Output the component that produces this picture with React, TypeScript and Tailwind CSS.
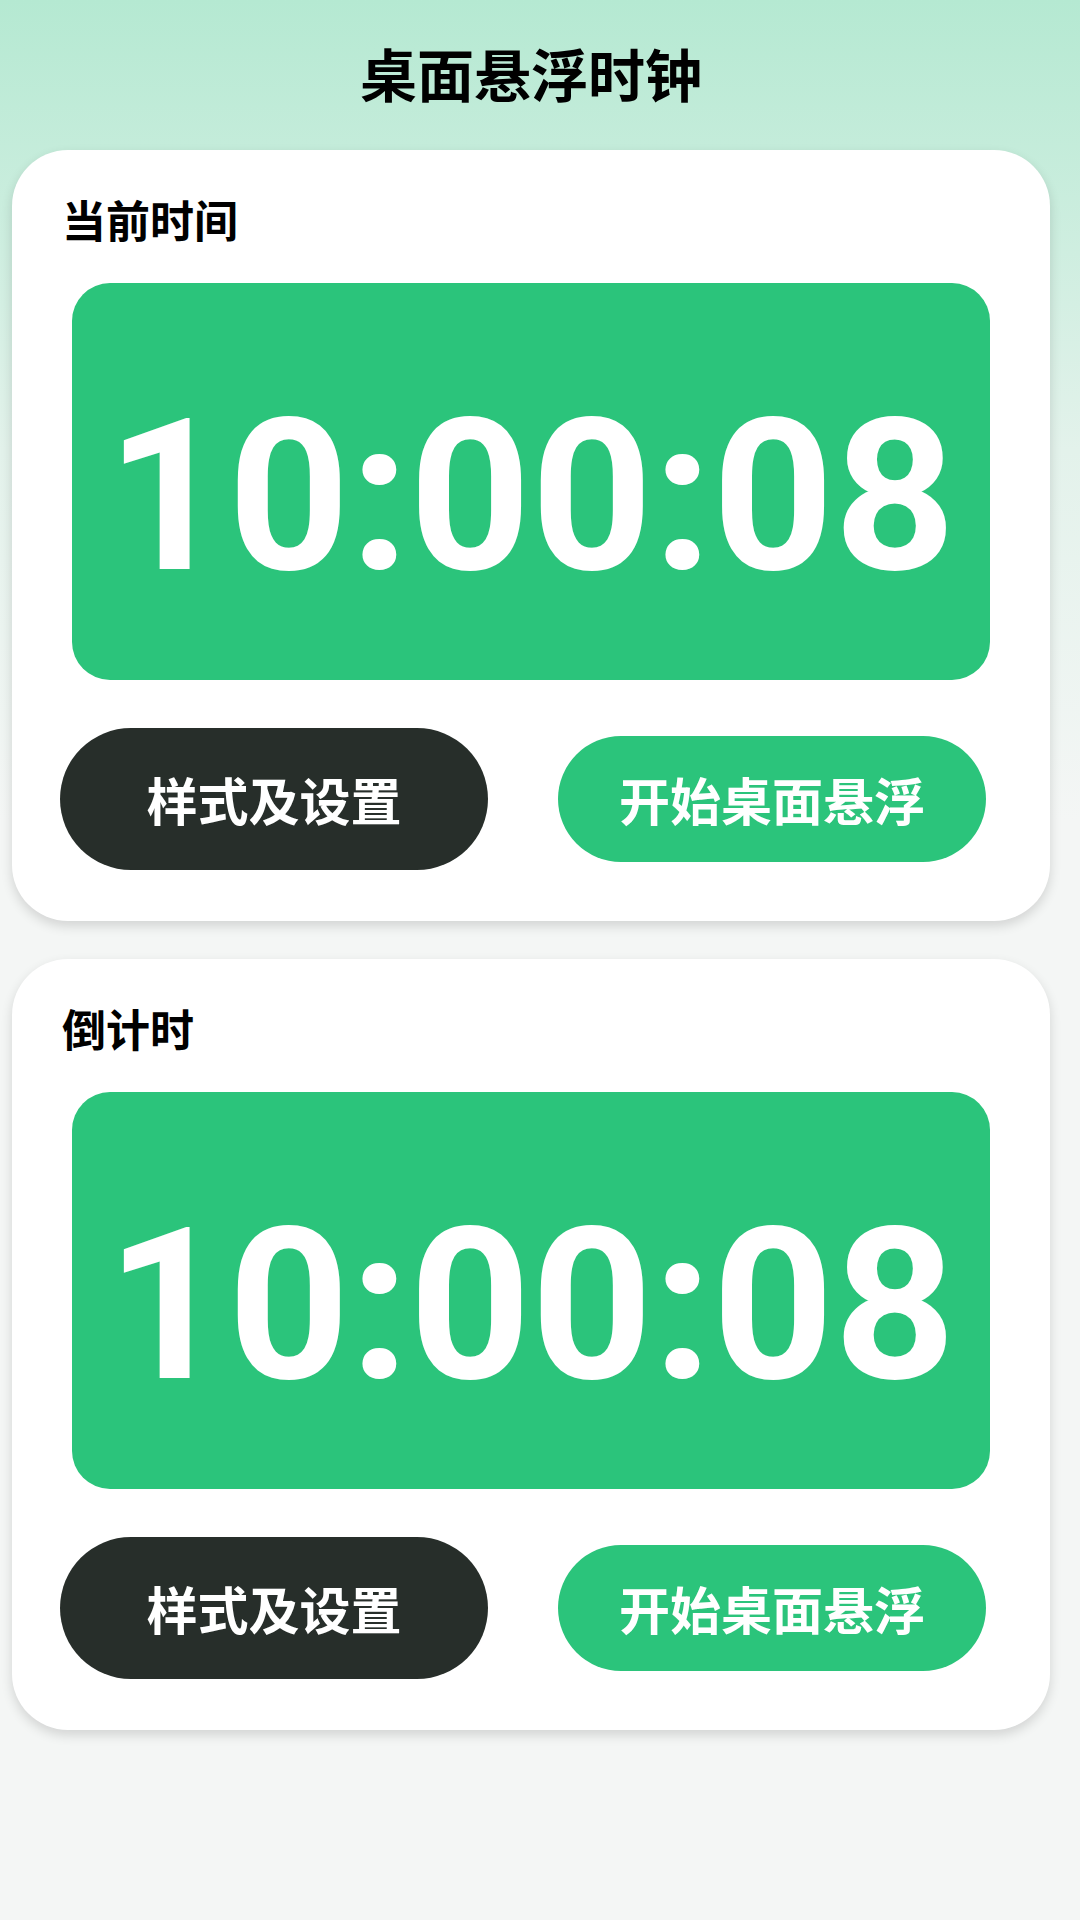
import React from "react";

const cjk = { fontFamily: '"Noto Sans CJK SC", "Noto Sans", sans-serif' };
const digits = { fontFamily: 'Roboto, "Noto Sans", sans-serif' };

interface ClockCardProps {
  label: string;
  time: string;
  className?: string;
}

const ClockCard: React.FC<ClockCardProps> = ({ label, time, className }) => {
  return (
    <section
      className={`rounded-[56px] bg-white pt-[47px] pb-[51px] shadow-[0_5px_12px_rgba(0,0,0,0.14)] ${className ?? ""}`}
    >
      <h2 className="pl-[50px] text-[44px] font-bold leading-none text-black" style={cjk}>
        {label}
      </h2>

      <div className="mx-[60px] mt-[42px] h-[397px] rounded-[38px] bg-[#2bc47b] pt-[108px] text-center">
        <span className="text-[212px] font-bold leading-none text-white" style={digits}>
          {time}
        </span>
      </div>

      <div className="mt-[48px] flex items-center">
        <button
          className="ml-[48px] flex h-[142px] w-[428px] items-center justify-center rounded-full bg-[#272e2a] text-[51px] font-bold text-white"
          style={cjk}
        >
          样式及设置
        </button>
        <button
          className="ml-[70px] flex h-[126px] w-[428px] items-center justify-center rounded-full bg-[#2bc47b] text-[51px] font-bold text-white"
          style={cjk}
        >
          开始桌面悬浮
        </button>
      </div>
    </section>
  );
};

export default function App() {
  return (
    <div className="min-h-[1920px] w-full bg-[linear-gradient(180deg,#b5e9d2_0px,#e3f2eb_450px,#f4f6f5_820px)]">
      <div className="w-[1062px] px-[12px]">
        <h1 className="pt-[44px] text-center text-[57px] font-bold leading-none text-black" style={cjk}>
          桌面悬浮时钟
        </h1>
        <ClockCard label="当前时间" time="10:00:08" className="mt-[49px]" />
        <ClockCard label="倒计时" time="10:00:08" className="mt-[38px]" />
      </div>
    </div>
  );
}
